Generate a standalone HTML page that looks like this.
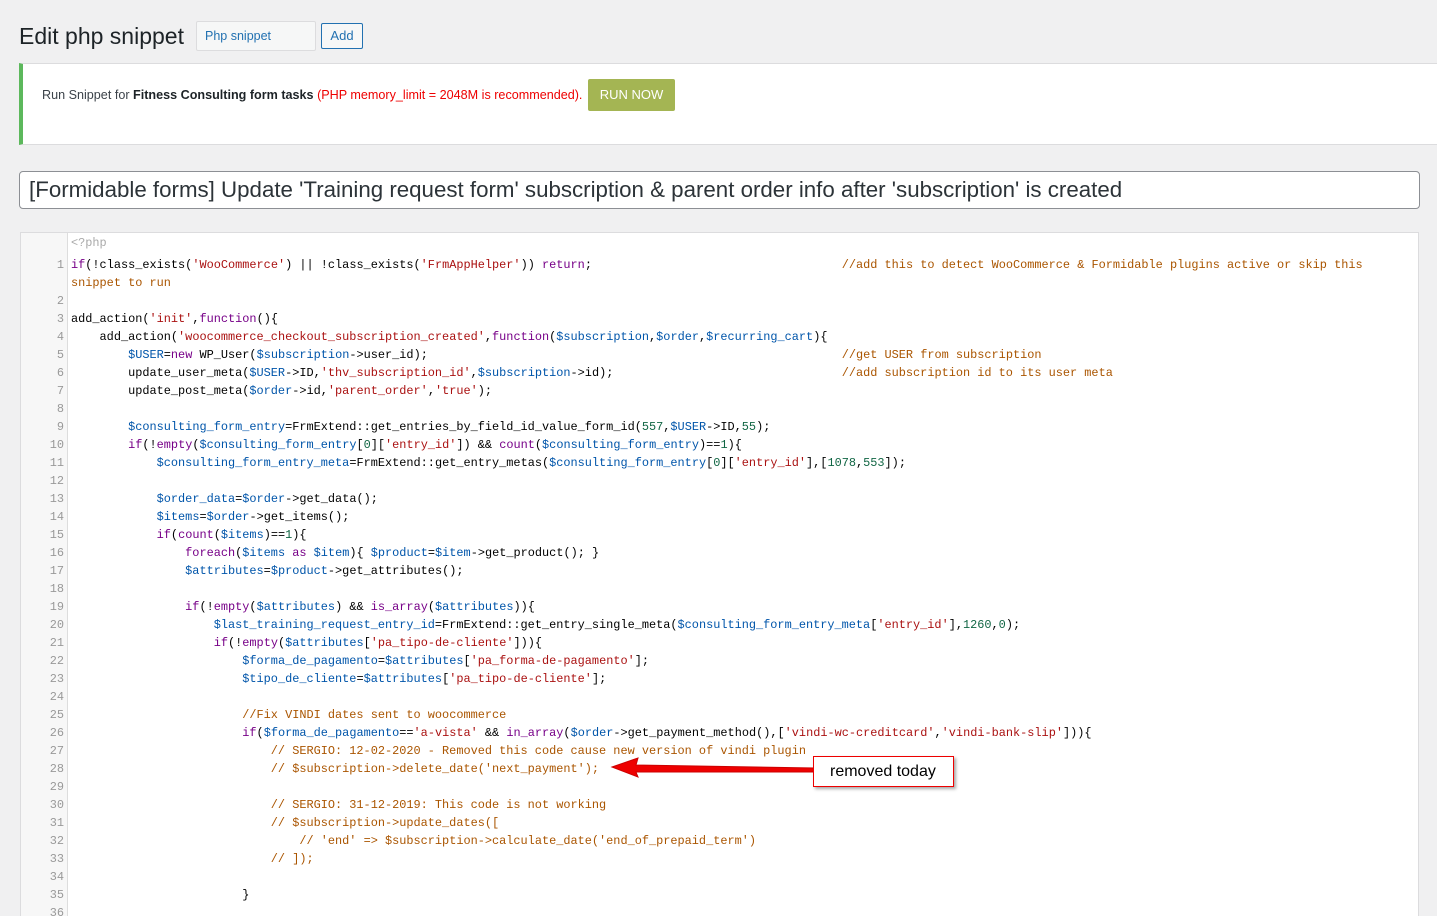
<!DOCTYPE html>
<html><head><meta charset="utf-8">
<style>
html,body{margin:0;width:1437px;height:916px;overflow:hidden}
body{background:#f0f0f1;font-family:"Liberation Sans",sans-serif;color:#1d2327;position:relative}
.h1{position:absolute;left:19px;top:23px;font-size:23px;color:#1d2327}
.inp{position:absolute;left:196px;top:21px;border:1px solid #dcdcde;background:#f6f7f7;border-radius:2px;font-size:12.5px;color:#2271b1;line-height:28px;padding-left:8px;box-sizing:border-box;width:120px;height:30px}
.add{position:absolute;left:321px;top:23px;width:42px;height:26px;border:1px solid #2271b1;border-radius:2px;font-size:13px;color:#2271b1;line-height:24px;text-align:center;box-sizing:border-box;background:#f6f7f7}
.notice{position:absolute;left:19px;top:63px;width:1418px;height:82px;background:#fff;border-left:4px solid #5cb85c;box-sizing:border-box;border-top:1px solid #dcdcde;border-bottom:1px solid #dcdcde}
.notice .t{position:absolute;left:19px;top:24px;font-size:12.6px;color:#3c434a;white-space:nowrap}
.notice .r{color:#e00}
.run{position:absolute;left:565px;top:15px;width:87px;height:32px;background:#a4b553;color:#fff;font-size:13px;line-height:32px;text-align:center;border-radius:2px}
.title{position:absolute;left:19px;top:171px;width:1401px;height:38px;border:1px solid #8c8f94;border-radius:4px;background:#fff;box-sizing:border-box;font-size:22.3px;line-height:36px;padding-left:9px;color:#2c3338;white-space:nowrap}
.ed{position:absolute;left:20px;top:232px;width:1399px;height:700px;background:#fff;border:1px solid #dcdcde;box-sizing:border-box;overflow:hidden}
.gut{position:absolute;left:0;top:0;width:46px;height:100%;background:#f7f7f7;border-right:1px solid #ddd}
.code{position:absolute;left:0;top:1px;width:1390px;font-family:"Liberation Mono",monospace;font-size:11.9px;line-height:18px;color:#000}
.row{height:18px;position:relative}
.row.first{height:22px}
.ln{position:absolute;left:0;width:43px;text-align:right;color:#999}
.tx{position:absolute;left:50px;white-space:pre}
.k{color:#708}.v{color:#05a}.s{color:#a11}.c{color:#a50}.n{color:#164}.m{color:#aaa}
.box{position:absolute;left:813px;top:756px;width:141px;height:31px;border:1px solid #e00;background:#fff;box-sizing:border-box;font-size:16px;line-height:29px;padding-left:16px;color:#000;box-shadow:2px 2px 3px rgba(0,0,0,.35)}
</style></head><body>
<div class="h1">Edit php snippet</div>
<div class="inp">Php snippet</div>
<div class="add">Add</div>
<div class="notice"><div class="t">Run Snippet for <b style="color:#1d2327">Fitness Consulting form tasks</b> <span class="r">(PHP memory_limit = 2048M is recommended).</span></div><div class="run">RUN NOW</div></div>
<div class="title">[Formidable forms] Update 'Training request form' subscription &amp; parent order info after 'subscription' is created</div>
<div class="ed"><div class="gut"></div>
<div class="code"><div class="row first"><span class="tx m">&lt;?php</span></div><div class="row"><span class="ln">1</span><span class="tx"><span class="k">if</span>(!class_exists(<span class="s">'WooCommerce'</span>) || !class_exists(<span class="s">'FrmAppHelper'</span>)) <span class="k">return</span>;                                   <span class="c">//add this to detect WooCommerce &amp; Formidable plugins active or skip this</span></span></div><div class="row"><span class="tx c">snippet to run</span></div><div class="row"><span class="ln">2</span></div><div class="row"><span class="ln">3</span><span class="tx">add_action(<span class="s">'init'</span>,<span class="k">function</span>(){</span></div><div class="row"><span class="ln">4</span><span class="tx">    add_action(<span class="s">'woocommerce_checkout_subscription_created'</span>,<span class="k">function</span>(<span class="v">$subscription</span>,<span class="v">$order</span>,<span class="v">$recurring_cart</span>){</span></div><div class="row"><span class="ln">5</span><span class="tx">        <span class="v">$USER</span>=<span class="k">new</span> WP_User(<span class="v">$subscription</span>-&gt;user_id);                                                          <span class="c">//get USER from subscription</span></span></div><div class="row"><span class="ln">6</span><span class="tx">        update_user_meta(<span class="v">$USER</span>-&gt;ID,<span class="s">'thv_subscription_id'</span>,<span class="v">$subscription</span>-&gt;id);                                <span class="c">//add subscription id to its user meta</span></span></div><div class="row"><span class="ln">7</span><span class="tx">        update_post_meta(<span class="v">$order</span>-&gt;id,<span class="s">'parent_order'</span>,<span class="s">'true'</span>);</span></div><div class="row"><span class="ln">8</span></div><div class="row"><span class="ln">9</span><span class="tx">        <span class="v">$consulting_form_entry</span>=FrmExtend::get_entries_by_field_id_value_form_id(<span class="n">557</span>,<span class="v">$USER</span>-&gt;ID,<span class="n">55</span>);</span></div><div class="row"><span class="ln">10</span><span class="tx">        <span class="k">if</span>(!<span class="k">empty</span>(<span class="v">$consulting_form_entry</span>[<span class="n">0</span>][<span class="s">'entry_id'</span>]) &amp;&amp; <span class="k">count</span>(<span class="v">$consulting_form_entry</span>)==<span class="n">1</span>){</span></div><div class="row"><span class="ln">11</span><span class="tx">            <span class="v">$consulting_form_entry_meta</span>=FrmExtend::get_entry_metas(<span class="v">$consulting_form_entry</span>[<span class="n">0</span>][<span class="s">'entry_id'</span>],[<span class="n">1078</span>,<span class="n">553</span>]);</span></div><div class="row"><span class="ln">12</span></div><div class="row"><span class="ln">13</span><span class="tx">            <span class="v">$order_data</span>=<span class="v">$order</span>-&gt;get_data();</span></div><div class="row"><span class="ln">14</span><span class="tx">            <span class="v">$items</span>=<span class="v">$order</span>-&gt;get_items();</span></div><div class="row"><span class="ln">15</span><span class="tx">            <span class="k">if</span>(<span class="k">count</span>(<span class="v">$items</span>)==<span class="n">1</span>){</span></div><div class="row"><span class="ln">16</span><span class="tx">                <span class="k">foreach</span>(<span class="v">$items</span> <span class="k">as</span> <span class="v">$item</span>){ <span class="v">$product</span>=<span class="v">$item</span>-&gt;get_product(); }</span></div><div class="row"><span class="ln">17</span><span class="tx">                <span class="v">$attributes</span>=<span class="v">$product</span>-&gt;get_attributes();</span></div><div class="row"><span class="ln">18</span></div><div class="row"><span class="ln">19</span><span class="tx">                <span class="k">if</span>(!<span class="k">empty</span>(<span class="v">$attributes</span>) &amp;&amp; <span class="k">is_array</span>(<span class="v">$attributes</span>)){</span></div><div class="row"><span class="ln">20</span><span class="tx">                    <span class="v">$last_training_request_entry_id</span>=FrmExtend::get_entry_single_meta(<span class="v">$consulting_form_entry_meta</span>[<span class="s">'entry_id'</span>],<span class="n">1260</span>,<span class="n">0</span>);</span></div><div class="row"><span class="ln">21</span><span class="tx">                    <span class="k">if</span>(!<span class="k">empty</span>(<span class="v">$attributes</span>[<span class="s">'pa_tipo-de-cliente'</span>])){</span></div><div class="row"><span class="ln">22</span><span class="tx">                        <span class="v">$forma_de_pagamento</span>=<span class="v">$attributes</span>[<span class="s">'pa_forma-de-pagamento'</span>];</span></div><div class="row"><span class="ln">23</span><span class="tx">                        <span class="v">$tipo_de_cliente</span>=<span class="v">$attributes</span>[<span class="s">'pa_tipo-de-cliente'</span>];</span></div><div class="row"><span class="ln">24</span></div><div class="row"><span class="ln">25</span><span class="tx">                        <span class="c">//Fix VINDI dates sent to woocommerce</span></span></div><div class="row"><span class="ln">26</span><span class="tx">                        <span class="k">if</span>(<span class="v">$forma_de_pagamento</span>==<span class="s">'a-vista'</span> &amp;&amp; <span class="k">in_array</span>(<span class="v">$order</span>-&gt;get_payment_method(),[<span class="s">'vindi-wc-creditcard'</span>,<span class="s">'vindi-bank-slip'</span>])){</span></div><div class="row"><span class="ln">27</span><span class="tx">                            <span class="c">// SERGIO: 12-02-2020 - Removed this code cause new version of vindi plugin</span></span></div><div class="row"><span class="ln">28</span><span class="tx">                            <span class="c">// $subscription-&gt;delete_date('next_payment');</span></span></div><div class="row"><span class="ln">29</span></div><div class="row"><span class="ln">30</span><span class="tx">                            <span class="c">// SERGIO: 31-12-2019: This code is not working</span></span></div><div class="row"><span class="ln">31</span><span class="tx">                            <span class="c">// $subscription-&gt;update_dates([</span></span></div><div class="row"><span class="ln">32</span><span class="tx">                                <span class="c">// 'end' =&gt; $subscription-&gt;calculate_date('end_of_prepaid_term')</span></span></div><div class="row"><span class="ln">33</span><span class="tx">                            <span class="c">// ]);</span></span></div><div class="row"><span class="ln">34</span></div><div class="row"><span class="ln">35</span><span class="tx">                        }</span></div><div class="row"><span class="ln">36</span></div></div></div>
<svg style="position:absolute;left:0;top:0" width="1437" height="916">
<polygon points="612,767 638,758 636,765 815,768 815,772 636,772 638,777" fill="#e00" stroke="#c00" stroke-width="1"/>
</svg>
<div class="box">removed today</div>
</body></html>
